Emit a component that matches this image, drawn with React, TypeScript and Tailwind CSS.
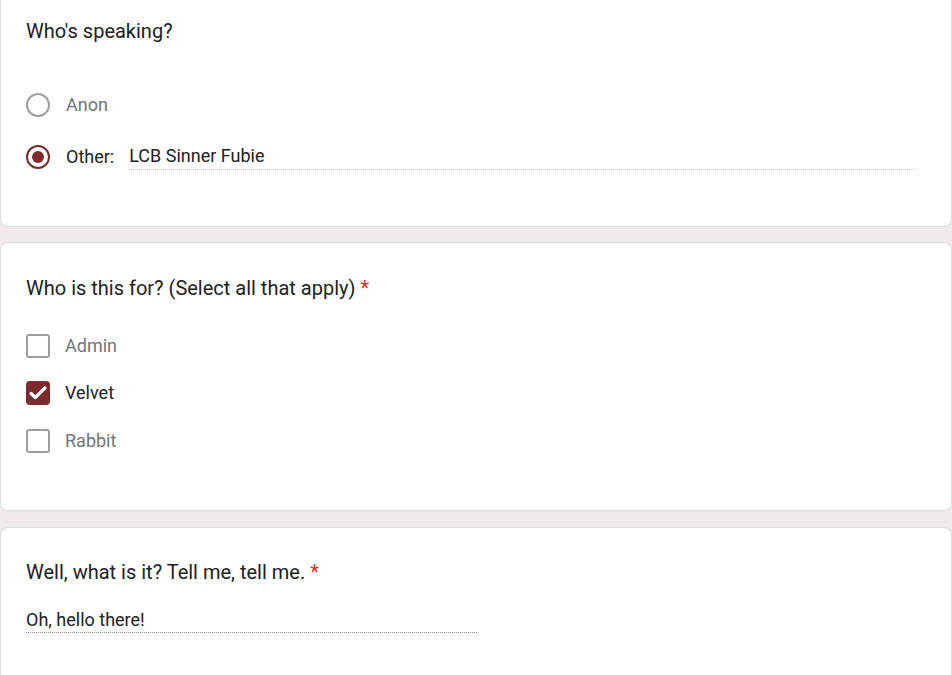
import React from "react";

function Radio({ checked }: { checked?: boolean }) {
  return checked ? (
    <span className="flex h-[24px] w-[24px] shrink-0 items-center justify-center rounded-full border-2 border-[#7b2a2e]">
      <span className="h-[12px] w-[12px] rounded-full bg-[#7b2a2e]" />
    </span>
  ) : (
    <span className="h-[24px] w-[24px] shrink-0 rounded-full border-2 border-[#9e9e9e]" />
  );
}

function Check({ checked }: { checked?: boolean }) {
  return checked ? (
    <span className="flex h-[24px] w-[24px] shrink-0 items-center justify-center rounded-[4px] bg-[#7b2a2e]">
      <svg width="22" height="22" viewBox="0 0 24 24">
        <path d="M4.5 12.5l4.5 4.5L19.5 6.5" fill="none" stroke="#fff" strokeWidth="3.6" strokeLinecap="round" strokeLinejoin="round" />
      </svg>
    </span>
  ) : (
    <span className="h-[24px] w-[24px] shrink-0 rounded-[3px] border-2 border-[#9e9e9e]" />
  );
}

export default function App() {
  return (
    <div className="h-[675px] w-[952px] overflow-hidden bg-[#f0eaeb] font-['Roboto',sans-serif] text-[#202124]">
      {/* Card 1 */}
      <div className="flex h-[227px] flex-col rounded-b-[8px] border border-t-0 border-[#dadce0] bg-white px-[25px] pt-[19px]">
        <div className="text-[20px] leading-[24px]">Who's speaking?</div>
        <div className="mt-[50px] flex items-center gap-[16px]">
          <Radio />
          <span className="text-[18px] leading-[24px] text-[#70757a]">Anon</span>
        </div>
        <div className="mt-[27px] flex items-center">
          <Radio checked />
          <span className="ml-[16px] text-[18px] leading-[24px]">Other:</span>
          <div className="ml-[15px] mr-[10px] flex-1 border-b border-dotted border-[#c4c7c5] pb-[1px] text-[18px] leading-[24px]">
            LCB Sinner Fubie
          </div>
        </div>
      </div>

      {/* Card 2 */}
      <div className="mt-[15px] flex h-[269px] flex-col rounded-[8px] border border-[#dadce0] bg-white px-[25px] pt-[33px]">
        <div className="text-[20px] leading-[24px]">
          Who is this for? (Select all that apply) <span className="text-[#d93025]">*</span>
        </div>
        <div className="mt-[34px] flex items-center gap-[15px]">
          <Check />
          <span className="text-[18px] leading-[24px] text-[#70757a]">Admin</span>
        </div>
        <div className="mt-[23px] flex items-center gap-[15px]">
          <Check checked />
          <span className="text-[18px] leading-[24px]">Velvet</span>
        </div>
        <div className="mt-[24px] flex items-center gap-[15px]">
          <Check />
          <span className="text-[18px] leading-[24px] text-[#70757a]">Rabbit</span>
        </div>
      </div>

      {/* Card 3 */}
      <div className="mt-[16px] flex h-[148px] flex-col rounded-t-[8px] border border-b-0 border-[#dadce0] bg-white px-[25px] pt-[32px]">
        <div className="text-[20px] leading-[24px]">
          Well, what is it? Tell me, tell me. <span className="text-[#d93025]">*</span>
        </div>
        <div className="mt-[25px] w-[451px] border-b border-dotted border-[#8a8d91] pb-[1px] text-[18px] leading-[22px]">
          Oh, hello there!
        </div>
      </div>
    </div>
  );
}
